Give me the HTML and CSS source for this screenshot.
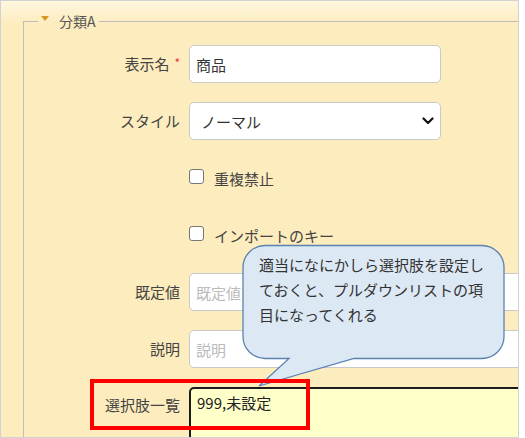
FILE: index.html
```html
<!DOCTYPE html>
<html lang="ja">
<head>
    <meta charset="UTF-8">
    <meta name="viewport" content="width=device-width, initial-scale=1.0">
    <title>項目設定</title>
    <link rel="stylesheet" href="styles.css">
</head>
<body>

    <div class="frame">
        <fieldset class="group">
            <legend class="group-title"><span class="caret"></span>分類A</legend>
            <div class="form-grid">
                <label class="field-label">表示名<span class="req">*</span></label>
                <input class="field-input short" type="text" value="商品">

                <label class="field-label">スタイル</label>
                <div class="select-wrap short">
                    <select class="field-select">
                        <option>ノーマル</option>
                    </select>
                    <svg class="chevron" width="12" height="8" viewBox="0 0 12 8"><path d="M1.5 1.5 L6 6 L10.5 1.5" fill="none" stroke="#111" stroke-width="2.2" stroke-linecap="round" stroke-linejoin="round"/></svg>
                </div>

                <span></span>
                <label class="check"><input type="checkbox"><span>重複禁止</span></label>

                <span></span>
                <label class="check"><input type="checkbox"><span>インポートのキー</span></label>

                <label class="field-label">既定値</label>
                <input class="field-input wide" type="text" placeholder="既定値">

                <label class="field-label">説明</label>
                <input class="field-input wide" type="text" placeholder="説明">

                <label class="field-label top">選択肢一覧</label>
                <textarea class="field-area wide">999,未設定</textarea>
            </div>
        </fieldset>

        <div class="callout">
            <svg class="callout-shape" width="272" height="146" viewBox="0 0 272 146">
                <path d="M24 1.5 H241 A22 22 0 0 1 263 23.5 V92.5 A22 22 0 0 1 241 114.5 H113 L18 142 L48 114.5 H24 A22 22 0 0 1 2 92.5 V23.5 A22 22 0 0 1 24 1.5 Z" fill="#dde8f5" stroke="#5a82b0" stroke-width="1.3"/>
            </svg>
            <p class="callout-text">適当になにかしら選択肢を設定しておくと、プルダウンリストの項目になってくれる</p>
        </div>

        <div class="highlight"></div>
    </div>

</body>
</html>
```

FILE: styles.css
```css
* {
    box-sizing: border-box;
}

body {
    margin: 0;
    font-family: "Noto Sans CJK JP", "Noto Sans", sans-serif;
    color: #444;
}

.frame {
    position: relative;
    width: 519px;
    height: 438px;
    border: 1px solid #d2d2d2;
    overflow: hidden;
    background: linear-gradient(#fef6de 0px, #fdecbd 24px);
}

.group {
    margin: 10px 0 0 22px;
    padding: 14px 0 0 0;
    width: 620px;
    height: 500px;
    border: 1px solid #bdbdbd;
    border-right: 0;
    border-bottom: 0;
}

.group-title {
    margin-left: 14px;
    padding: 0 3px;
    font-size: 14px;
    line-height: 20px;
    color: #555;
    display: flex;
    align-items: center;
}

.caret {
    width: 0;
    height: 0;
    border-left: 4.5px solid transparent;
    border-right: 4.5px solid transparent;
    border-top: 5px solid #d39a1c;
    margin-right: 10px;
    margin-top: -6px;
}

.form-grid {
    display: grid;
    grid-template-columns: 156px auto;
    column-gap: 9px;
    row-gap: 19px;
    align-items: center;
}

.field-label {
    text-align: right;
    font-size: 15px;
    line-height: 20px;
    color: #444;
}

.field-label.top {
    align-self: start;
    padding-top: 8px;
}

.req {
    color: #e33;
    font-size: 12px;
    margin-left: 5px;
    position: relative;
    top: -2px;
}

.field-input,
.field-select,
.field-area {
    font-family: inherit;
    font-size: 15px;
    color: #333;
    height: 38px;
    border: 1px solid #c9c9c9;
    border-radius: 5px;
    background: #fff;
    outline: none;
}

.field-input {
    padding: 0 6px;
}

.field-input::placeholder {
    color: #bbb;
}

.short {
    width: 252px;
}

.wide {
    width: 420px;
}

.select-wrap {
    position: relative;
}

.field-select {
    width: 100%;
    padding: 0 11px;
    appearance: none;
    -webkit-appearance: none;
}

.chevron {
    position: absolute;
    right: 7px;
    top: 15px;
}

.check {
    display: flex;
    align-items: center;
    gap: 10px;
    height: 38px;
    font-size: 15px;
    color: #444;
}

.check input {
    appearance: none;
    -webkit-appearance: none;
    margin: -3px 0 0 0;
    width: 15px;
    height: 15px;
    border: 1.5px solid #777;
    border-radius: 3px;
    background: #fff;
}

.field-area {
    height: 60px;
    border: 2px solid #1c1c1c;
    background: #ffffca;
    padding: 4px 6px;
    line-height: 20px;
    resize: none;
    color: #222;
}

.callout {
    position: absolute;
    left: 240px;
    top: 243px;
    width: 272px;
    height: 146px;
}

.callout-shape {
    display: block;
}

.callout-text {
    position: absolute;
    left: 18px;
    top: 8px;
    width: 232px;
    margin: 0;
    font-size: 15px;
    line-height: 25px;
    color: #333;
}

.highlight {
    position: absolute;
    left: 89px;
    top: 378px;
    width: 220px;
    height: 51px;
    border: 4px solid #f00;
}
```
